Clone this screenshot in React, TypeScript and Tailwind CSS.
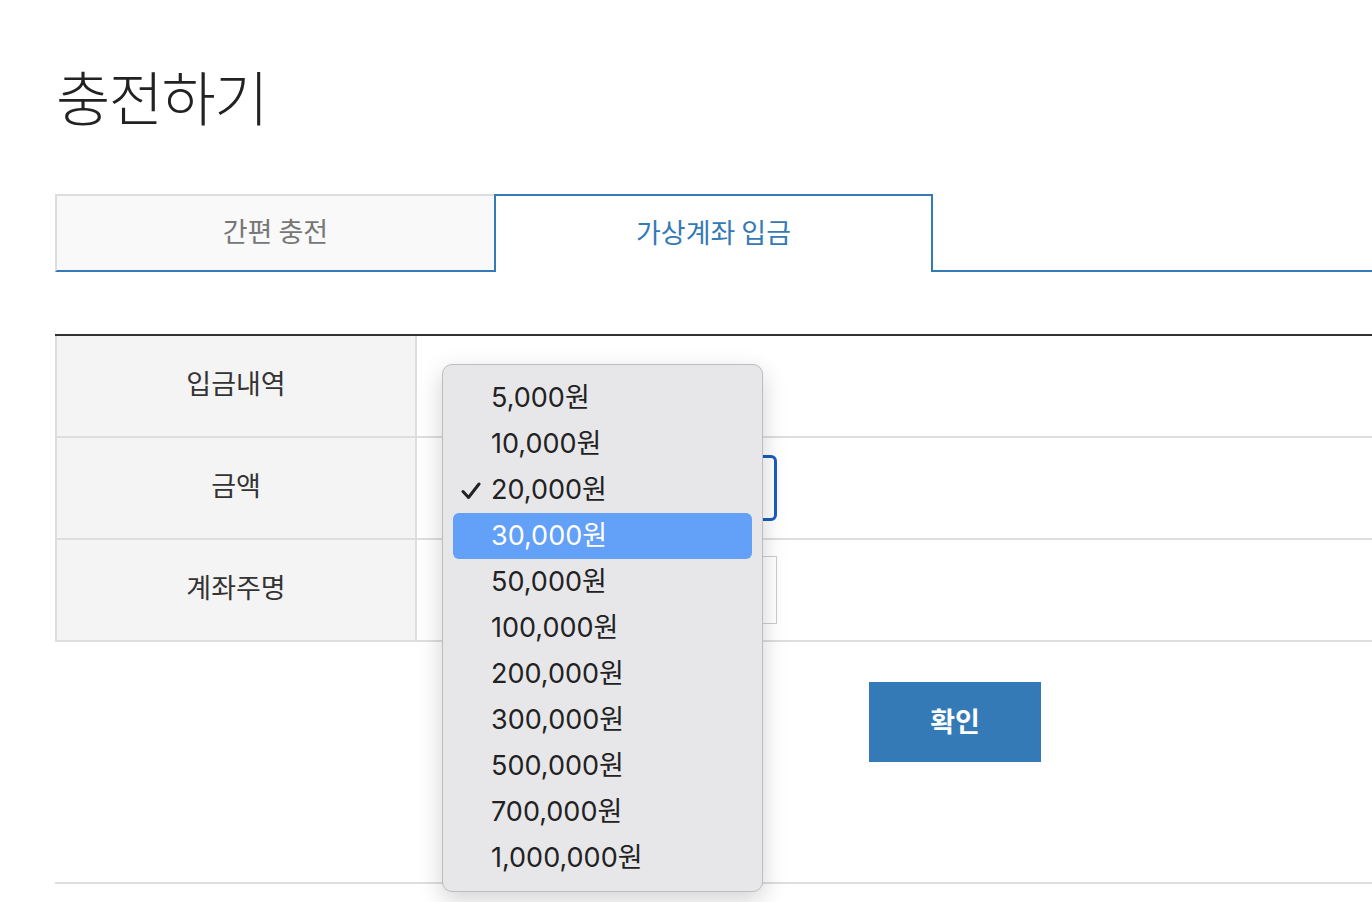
import React from 'react';

const AMOUNTS = [
  '5,000원',
  '10,000원',
  '20,000원',
  '30,000원',
  '50,000원',
  '100,000원',
  '200,000원',
  '300,000원',
  '500,000원',
  '700,000원',
  '1,000,000원',
];

const KR = "font-['Noto_Sans_CJK_KR','Noto_Sans',sans-serif]";

// native-looking select popup (macOS style)
const AmountPopup: React.FC<{ selected: number; hovered: number }> = ({ selected, hovered }) => (
  <div className="absolute left-[442px] top-[364px] w-[321px] rounded-[10px] border border-[#bdbdbf] bg-[#e7e7ea] py-[10px] px-[10px] shadow-[0_8px_24px_rgba(0,0,0,0.18)] font-['Inter','Noto_Sans_CJK_KR',sans-serif]">
    {AMOUNTS.map((a, i) => (
      <div
        key={a}
        className={`relative flex h-[46px] items-center rounded-[6px] pl-[38px] text-[27px] ${
          i === hovered ? 'bg-[#63a0f8] text-white' : 'text-[#222]'
        }`}
      >
        {i === selected && (
          <svg className="absolute left-[8px] top-[15px] h-[18px] w-[20px]" viewBox="0 0 20 18" fill="none">
            <path d="M2 9.5 L7.5 15.5 L18 2" stroke="#222" strokeWidth="3" strokeLinecap="round" strokeLinejoin="round" />
          </svg>
        )}
        <span>{a}</span>
      </div>
    ))}
  </div>
);

const Row: React.FC<{ label: string; children?: React.ReactNode }> = ({ label, children }) => (
  <div className="flex h-[102px] border-b-2 border-[#ddd]">
    <div className="flex w-[362px] shrink-0 items-center justify-center border-l-2 border-r-2 border-[#ddd] bg-[#f4f4f4] pb-[5px] text-[27px] text-[#333]">
      {label}
    </div>
    <div className="flex flex-1 items-center pl-[30px]">{children}</div>
  </div>
);

const App: React.FC = () => {
  return (
    <div className={`relative h-[902px] w-full overflow-hidden bg-white ${KR}`}>
      <div className="pl-[55px]">
        <h1 className="pt-[60px] pl-[1px] text-[59px] font-light leading-[72px] tracking-[-1.5px] text-[#222]">충전하기</h1>

        {/* tabs */}
        <div className="mt-[62px] flex h-[78px]">
          <div className="flex w-[439px] items-center justify-center border-l-2 border-t-2 border-b-2 border-[#ddd] border-b-[#337ab7] bg-[#f9f9f9] pb-[3px] text-[27px] text-[#777]">
            간편 충전
          </div>
          <div className="flex w-[439px] items-center justify-center border-2 border-b-0 border-[#337ab7] bg-white pb-[3px] text-[27px] text-[#337ab7]">
            가상계좌 입금
          </div>
          <div className="flex-1 border-b-2 border-[#337ab7]" />
        </div>

        {/* form table */}
        <div className="mt-[62px] border-t-2 border-[#333]">
          <Row label="입금내역" />
          <Row label="금액">
            <div className="h-[66px] w-[330px] rounded-[6px] border-[3px] border-[#1a5bc4] bg-white" />
          </Row>
          <Row label="계좌주명">
            <div className="h-[68px] w-[330px] border border-[#ccc] bg-white" />
          </Row>
        </div>

        <div className="flex h-[242px] flex-col border-b-2 border-[#ddd]">
          <button className="ml-[814px] mt-[40px] flex h-[80px] w-[172px] items-center justify-center bg-[#337ab7] pb-[2px] text-[27px] font-semibold text-white">
            확인
          </button>
        </div>
      </div>

      <AmountPopup selected={2} hovered={3} />
    </div>
  );
};

export default App;
